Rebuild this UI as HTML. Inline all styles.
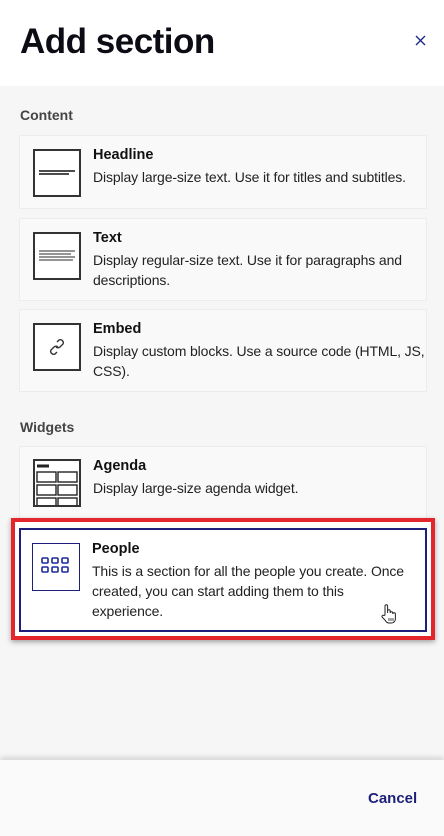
<!DOCTYPE html>
<html><head><meta charset="utf-8"><style>
*{margin:0;padding:0;box-sizing:border-box}
body{width:444px;height:836px;overflow:hidden;background:#f6f6f6;font-family:"Liberation Sans",sans-serif;position:relative;color:#1a1a1a}
.hdr{position:absolute;left:0;top:0;width:444px;height:86px;background:#fff}
.hdr h1{position:absolute;left:20px;top:22px;font-size:35px;font-weight:bold;letter-spacing:-0.5px;color:#0c0c14}
.x{position:absolute;left:415px;top:35px}
.lbl{position:absolute;left:20px;font-size:14px;font-weight:bold;color:#444}
.card{position:absolute;left:19px;width:408px;background:#f9f9f9;border:1px solid #ececec}
.ic{position:absolute;left:13px;width:48px;height:48px;border:2px solid #333;background:#fff}
.t{position:absolute;left:73px;font-size:14.5px;font-weight:bold;color:#111}
.d{position:absolute;left:73px;font-size:14px;letter-spacing:-0.12px;line-height:20px;color:#222;white-space:nowrap}
.red{position:absolute;left:11px;top:518px;width:424px;height:122px;border:4px solid #e3262c;box-shadow:0 2px 5px rgba(0,0,0,.35);background:#fff}
.ftr{position:absolute;left:0;top:760px;width:444px;height:76px;background:#fafafa;box-shadow:0 -3px 5px rgba(0,0,0,.12)}
.cancel{position:absolute;left:368px;top:30px;font-size:15px;font-weight:bold;color:#1d1f7a}
</style></head><body>
<div class="hdr"><h1>Add section</h1>
<svg class="x" width="11" height="11" viewBox="0 0 11 11"><path d="M1 1L10 10M10 1L1 10" stroke="#1d2a8a" stroke-width="1.4"/></svg></div>

<div class="lbl" style="top:107px">Content</div>
<div class="card" style="top:135px;height:74px">
<div class="ic" style="top:13px"><svg width="44" height="44"><path d="M4 20H40M4 23H34" stroke="#333" stroke-width="1.8"/></svg></div>
<div class="t" style="top:11px">Headline</div>
<div class="d" style="top:31px">Display large-size text. Use it for titles and subtitles.</div></div>

<div class="card" style="top:218px;height:83px">
<div class="ic" style="top:13px"><svg width="44" height="44"><path d="M4 17H40M4 20H36M4 23H40M4 26H38" stroke="#555" stroke-width="1.3"/></svg></div>
<div class="t" style="top:11px">Text</div>
<div class="d" style="top:31px">Display regular-size text. Use it for paragraphs and<br>descriptions.</div></div>

<div class="card" style="top:309px;height:83px">
<div class="ic" style="top:13px"><svg width="44" height="44" viewBox="0 0 44 44"><g fill="none" stroke="#333" stroke-width="1.4"><path d="M22 17l2-2a3 3 0 0 1 4 4l-3 3a3 3 0 0 1-4 0"/><path d="M22 27l-2 2a3 3 0 0 1-4-4l3-3a3 3 0 0 1 4 0"/></g></svg></div>
<div class="t" style="top:11px">Embed</div>
<div class="d" style="top:31px">Display custom blocks. Use a source code (HTML, JS,<br>CSS).</div></div>

<div class="lbl" style="top:419px">Widgets</div>
<div class="card" style="top:446px;height:76px">
<div class="ic" style="top:12px;overflow:hidden"><svg width="44" height="46"><path d="M2 5H14" stroke="#222" stroke-width="3"/><g fill="none" stroke="#222" stroke-width="1.4"><rect x="2" y="11" width="19" height="10"/><rect x="23" y="11" width="19" height="10"/><rect x="2" y="24" width="19" height="10"/><rect x="23" y="24" width="19" height="10"/><rect x="2" y="37" width="19" height="10"/><rect x="23" y="37" width="19" height="10"/></g></svg></div>
<div class="t" style="top:11px">Agenda</div>
<div class="d" style="top:31px">Display large-size agenda widget.</div></div>

<div class="red"><div style="position:absolute;left:4px;top:6px;width:408px;height:104px;border:2px solid #1d1f7a;background:#fff">
<div class="ic" style="left:11px;top:13px;border:1.5px solid #1d1f7a"><svg width="44" height="44"><g fill="none" stroke="#1d2a9a" stroke-width="1.6"><rect x="9" y="14" width="6" height="5" rx="1"/><rect x="19" y="14" width="6" height="5" rx="1"/><rect x="29" y="14" width="6" height="5" rx="1"/><rect x="9" y="23" width="6" height="5" rx="1"/><rect x="19" y="23" width="6" height="5" rx="1"/><rect x="29" y="23" width="6" height="5" rx="1"/></g></svg></div>
<div class="t" style="left:71px;top:11px">People</div>
<div class="d" style="left:71px;top:31px">This is a section for all the people you create. Once<br>created, you can start adding them to this<br>experience.</div>
<svg style="position:absolute;left:358px;top:73px" width="20" height="22" viewBox="0 0 20 22"><path d="M6 12V3a1.3 1.3 0 0 1 2.6 0v7V8a1.3 1.3 0 0 1 2.6 0v2a1.3 1.3 0 0 1 2.6 0v1a1.3 1.3 0 0 1 2.6 0v5c0 2-1.5 4-4 4H10c-2 0-3-1-4-3L3 14a1.3 1.3 0 0 1 2-1.5z" fill="#fff" stroke="#222" stroke-width="1"/><path d="M10 15v3M12 15v3M14 15v3" stroke="#222" stroke-width=".8"/></svg>
</div></div>

<div class="ftr"><div class="cancel">Cancel</div></div>
</body></html>
